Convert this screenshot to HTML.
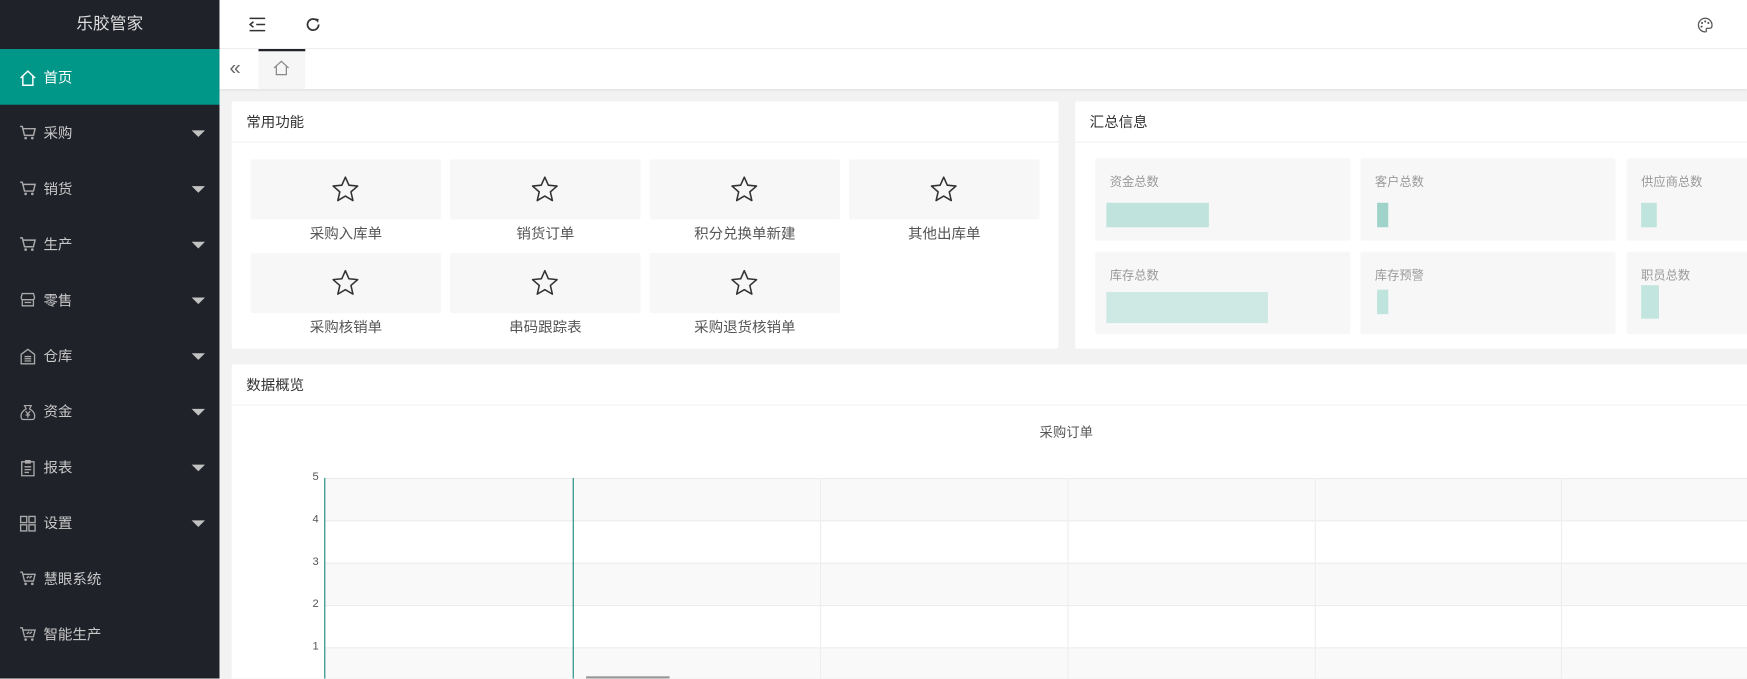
<!DOCTYPE html>
<html><head><meta charset="utf-8"><style>
*{box-sizing:border-box;margin:0;padding:0}
html,body{width:1747px;height:679px;overflow:hidden;background:#f2f2f2}
#w{position:absolute;left:0;top:0;width:1568px;height:609px;transform:scale(1.11416);transform-origin:0 0;font-family:"Liberation Sans","Noto Sans CJK SC",sans-serif;background:#f2f2f2;overflow:hidden}
.a{position:absolute}
#side{left:0;top:0;width:197px;height:609px;background:#20222a}
#logo{left:0;top:0;width:197px;height:44px;line-height:44px;text-align:center;color:#ddd;font-size:15px}
.mi{position:absolute;left:0;width:197px;height:50px;color:#c8c8c8;font-size:13px;line-height:52px}
.mi span{position:absolute;left:39px}
.mi svg{position:absolute;left:17px;top:18px}
.mi .ar{position:absolute;left:172px;top:23px;width:0;height:0;border-left:6px solid transparent;border-right:6px solid transparent;border-top:6px solid #c2c2c2}
.card{background:#fff;border-radius:2px}
.ch{position:absolute;left:0;top:0;right:0;height:37px;border-bottom:1px solid #f2f2f2;line-height:37px;padding-left:13px;font-size:13px;color:#333}
.qb{position:absolute;width:171px;height:54px;background:#f7f7f7;border-radius:2px}
.qb svg{position:absolute;left:72px;top:14px}
.ql{position:absolute;width:171px;text-align:center;font-size:13px;color:#555}
.sb{position:absolute;width:229px;height:74px;background:#f7f7f7;border-radius:2px}
.sb span{position:absolute;left:13px;top:13px;font-size:11px;color:#999}
.yl{position:absolute;left:276px;font-size:10px;color:#555;width:10px;text-align:right}
</style></head><body><div id="w">
<div id="side" class="a">
<div id="logo" class="a">乐胶管家</div>
<div class="mi" style="top:44px;height:50px;background:#009688;color:#fff"><svg width="16" height="16" viewBox="0 0 16 16"><path d="M1.5 8 L8 1.8 L14.5 8 M3.5 6.5 V14.5 H12.5 V6.5" fill="none" stroke="#fff" stroke-width="1.3"/></svg><span>首页</span></div>
<div class="mi" style="top:94px"><svg width="16" height="14" viewBox="0 0 16 14"><path d="M1 1.5H3l2 8h8l1.5-6H4" fill="none" stroke="#aaa" stroke-width="1.3"/><circle cx="6" cy="12" r="1.2" fill="#aaa"/><circle cx="12" cy="12" r="1.2" fill="#aaa"/></svg><span>采购</span><i class="ar"></i></div>
<div class="mi" style="top:144px"><svg width="16" height="14" viewBox="0 0 16 14"><path d="M1 1.5H3l2 8h8l1.5-6H4" fill="none" stroke="#aaa" stroke-width="1.3"/><circle cx="6" cy="12" r="1.2" fill="#aaa"/><circle cx="12" cy="12" r="1.2" fill="#aaa"/></svg><span>销货</span><i class="ar"></i></div>
<div class="mi" style="top:194px"><svg width="16" height="14" viewBox="0 0 16 14"><path d="M1 1.5H3l2 8h8l1.5-6H4" fill="none" stroke="#aaa" stroke-width="1.3"/><circle cx="6" cy="12" r="1.2" fill="#aaa"/><circle cx="12" cy="12" r="1.2" fill="#aaa"/></svg><span>生产</span><i class="ar"></i></div>
<div class="mi" style="top:244px"><svg width="16" height="14" viewBox="0 0 16 14"><path d="M2 5 L3 1.5 H13 L14 5 Q14 7 12 7 H4 Q2 7 2 5Z M3 7 V12.5 H13 V7 M5 9.5 H11" fill="none" stroke="#aaa" stroke-width="1.2"/></svg><span>零售</span><i class="ar"></i></div>
<div class="mi" style="top:294px"><svg width="16" height="16" viewBox="0 0 16 16"><path d="M2 6 L8 1.5 L14 6 V14.5 H2Z M5 8h6M5 10h6M5 12h6" fill="none" stroke="#aaa" stroke-width="1.2"/></svg><span>仓库</span><i class="ar"></i></div>
<div class="mi" style="top:344px"><svg width="16" height="16" viewBox="0 0 16 16"><path d="M5 2 H11 L9.5 5 Q15 8 14 13 Q13.5 14.5 12 14.5 H4 Q2.5 14.5 2 13 Q1 8 6.5 5Z M6 7l2 2.5 2-2.5M8 9.5V13M6 10.5h4" fill="none" stroke="#aaa" stroke-width="1.1"/></svg><span>资金</span><i class="ar"></i></div>
<div class="mi" style="top:394px"><svg width="16" height="16" viewBox="0 0 16 16"><path d="M2.5 2.5 H13.5 V15 H2.5Z M6 1.5 H10 V3.5 H6Z M5 7h6M5 9.5h6M5 12h4" fill="none" stroke="#aaa" stroke-width="1.2"/></svg><span>报表</span><i class="ar"></i></div>
<div class="mi" style="top:444px"><svg width="16" height="16" viewBox="0 0 16 16"><path d="M1.5 1.5h5.5v5.5h-5.5zM9 1.5h5.5v5.5H9zM1.5 9h5.5v5.5h-5.5zM9 9h5.5v5.5H9z" fill="none" stroke="#aaa" stroke-width="1.2"/></svg><span>设置</span><i class="ar"></i></div>
<div class="mi" style="top:494px"><svg width="16" height="14" viewBox="0 0 16 14"><path d="M1 1.5H3l2 8h8l1.5-6H4M7 7l2-2M9.5 7l2-2" fill="none" stroke="#aaa" stroke-width="1.2"/><circle cx="6" cy="12" r="1.2" fill="#aaa"/><circle cx="12" cy="12" r="1.2" fill="#aaa"/></svg><span>慧眼系统</span></div>
<div class="mi" style="top:544px"><svg width="16" height="14" viewBox="0 0 16 14"><path d="M1 1.5H3l2 8h8l1.5-6H4M7 7l2-2M9.5 7l2-2" fill="none" stroke="#aaa" stroke-width="1.2"/><circle cx="6" cy="12" r="1.2" fill="#aaa"/><circle cx="12" cy="12" r="1.2" fill="#aaa"/></svg><span>智能生产</span></div>
</div>
<div class="a" style="left:197px;top:0;width:1371px;height:44px;background:#fff;border-bottom:1px solid #f0f0f0"></div>
<svg class="a" style="left:223px;top:15px" width="16" height="14" viewBox="0 0 16 14"><path d="M1 1.5h14M7 7h8M1 12.5h14M4.5 4.5 L1.5 7 L4.5 9.5" fill="none" stroke="#333" stroke-width="1.4"/></svg>
<svg class="a" style="left:273px;top:14px" width="16" height="16" viewBox="0 0 16 16"><path d="M13 8 A5 5 0 1 1 11.3 4.3" fill="none" stroke="#333" stroke-width="1.6"/><path d="M9.5 2.5 L13 3 L12.5 6.5Z" fill="#333"/></svg>
<svg class="a" style="left:1523px;top:15px" width="15" height="15" viewBox="0 0 16 16"><path d="M8 1.5 A6.5 6.5 0 0 0 8 14.5 Q9.5 14.5 9 12.8 Q8.5 11 10.5 11 H12.5 Q14.5 11 14.5 8 A6.5 6.5 0 0 0 8 1.5Z" fill="none" stroke="#555" stroke-width="1.2"/><circle cx="5" cy="6" r="1" fill="#555"/><circle cx="8" cy="4.5" r="1" fill="#555"/><circle cx="11" cy="6" r="1" fill="#555"/><circle cx="4.5" cy="9.5" r="1" fill="#555"/></svg>
<div class="a" style="left:197px;top:44px;width:1371px;height:36px;background:#fff;box-shadow:0 1px 2px rgba(0,0,0,.1)"></div>
<div class="a" style="left:206px;top:51px;font-size:18px;color:#666;letter-spacing:-5px">«</div>
<div class="a" style="left:232px;top:44px;width:42px;height:36px;background:#f6f6f6;border-top:2px solid #20222a"></div>
<svg class="a" style="left:245px;top:54px" width="15" height="14" viewBox="0 0 15 14"><path d="M1 7 L7.5 1 L14 7 M3 5.5 V13 H12 V5.5" fill="none" stroke="#888" stroke-width="1.1"/></svg>

<div class="a card" style="left:208px;top:91px;width:742px;height:222px">
<div class="ch">常用功能</div>
</div>
<div class="a card" style="left:965px;top:91px;width:610px;height:222px">
<div class="ch">汇总信息</div>
</div>
<div class="a card" style="left:208px;top:327px;width:1370px;height:290px">
<div class="ch">数据概览</div>
</div>
<div class="qb" style="left:225px;top:143px"><svg width="26" height="26" viewBox="0 0 26 26"><path d="M13 2 L16.2 9.2 L24 10 L18 15.2 L19.8 23 L13 19 L6.2 23 L8 15.2 L2 10 L9.8 9.2Z" fill="none" stroke="#333" stroke-width="1.4" stroke-linejoin="round"/></svg></div>
<div class="qb" style="left:404px;top:143px"><svg width="26" height="26" viewBox="0 0 26 26"><path d="M13 2 L16.2 9.2 L24 10 L18 15.2 L19.8 23 L13 19 L6.2 23 L8 15.2 L2 10 L9.8 9.2Z" fill="none" stroke="#333" stroke-width="1.4" stroke-linejoin="round"/></svg></div>
<div class="qb" style="left:583px;top:143px"><svg width="26" height="26" viewBox="0 0 26 26"><path d="M13 2 L16.2 9.2 L24 10 L18 15.2 L19.8 23 L13 19 L6.2 23 L8 15.2 L2 10 L9.8 9.2Z" fill="none" stroke="#333" stroke-width="1.4" stroke-linejoin="round"/></svg></div>
<div class="qb" style="left:762px;top:143px"><svg width="26" height="26" viewBox="0 0 26 26"><path d="M13 2 L16.2 9.2 L24 10 L18 15.2 L19.8 23 L13 19 L6.2 23 L8 15.2 L2 10 L9.8 9.2Z" fill="none" stroke="#333" stroke-width="1.4" stroke-linejoin="round"/></svg></div>
<div class="qb" style="left:225px;top:227px"><svg width="26" height="26" viewBox="0 0 26 26"><path d="M13 2 L16.2 9.2 L24 10 L18 15.2 L19.8 23 L13 19 L6.2 23 L8 15.2 L2 10 L9.8 9.2Z" fill="none" stroke="#333" stroke-width="1.4" stroke-linejoin="round"/></svg></div>
<div class="qb" style="left:404px;top:227px"><svg width="26" height="26" viewBox="0 0 26 26"><path d="M13 2 L16.2 9.2 L24 10 L18 15.2 L19.8 23 L13 19 L6.2 23 L8 15.2 L2 10 L9.8 9.2Z" fill="none" stroke="#333" stroke-width="1.4" stroke-linejoin="round"/></svg></div>
<div class="qb" style="left:583px;top:227px"><svg width="26" height="26" viewBox="0 0 26 26"><path d="M13 2 L16.2 9.2 L24 10 L18 15.2 L19.8 23 L13 19 L6.2 23 L8 15.2 L2 10 L9.8 9.2Z" fill="none" stroke="#333" stroke-width="1.4" stroke-linejoin="round"/></svg></div>
<div class="ql" style="left:225px;top:199px">采购入库单</div>
<div class="ql" style="left:404px;top:199px">销货订单</div>
<div class="ql" style="left:583px;top:199px">积分兑换单新建</div>
<div class="ql" style="left:762px;top:199px">其他出库单</div>
<div class="ql" style="left:225px;top:283px">采购核销单</div>
<div class="ql" style="left:404px;top:283px">串码跟踪表</div>
<div class="ql" style="left:583px;top:283px">采购退货核销单</div>

<div class="sb" style="left:983px;top:142px"><span>资金总数</span><div class="a" style="left:10px;top:40px;width:92px;height:22px;background:#b2ddd6;opacity:.8"></div></div>
<div class="sb" style="left:1221px;top:142px"><span>客户总数</span><div class="a" style="left:15px;top:40px;width:10px;height:22px;background:#9fd3ca"></div></div>
<div class="sb" style="left:1460px;top:142px;width:120px"><span>供应商总数</span><div class="a" style="left:13px;top:40px;width:14px;height:22px;background:#bfe3dd"></div></div>
<div class="sb" style="left:983px;top:226px"><span>库存总数</span><div class="a" style="left:10px;top:36px;width:145px;height:28px;background:#c3e5df;opacity:.8"></div></div>
<div class="sb" style="left:1221px;top:226px"><span>库存预警</span><div class="a" style="left:15px;top:34px;width:10px;height:22px;background:#bfe3dd"></div></div>
<div class="sb" style="left:1460px;top:226px;width:120px"><span>职员总数</span><div class="a" style="left:13px;top:30px;width:16px;height:30px;background:#c3e5df"></div></div>

<div class="a" style="left:933px;top:379px;font-size:12px;color:#555">采购订单</div>
<div class="a" style="left:292px;top:429px;width:1290px;height:38px;background:#f9f9f9;border-top:1px solid #ececec"></div>
<div class="a" style="left:292px;top:467px;width:1290px;border-top:1px solid #ececec"></div>
<div class="a" style="left:292px;top:505px;width:1290px;height:38px;background:#f9f9f9;border-top:1px solid #ececec"></div>
<div class="a" style="left:292px;top:543px;width:1290px;border-top:1px solid #ececec"></div>
<div class="a" style="left:292px;top:581px;width:1290px;height:40px;background:#f9f9f9;border-top:1px solid #ececec"></div>
<div class="a" style="left:736px;top:429px;height:190px;border-left:1px solid #eee"></div>
<div class="a" style="left:958px;top:429px;height:190px;border-left:1px solid #eee"></div>
<div class="a" style="left:1180px;top:429px;height:190px;border-left:1px solid #eee"></div>
<div class="a" style="left:1401px;top:429px;height:190px;border-left:1px solid #eee"></div>
<div class="a" style="left:291px;top:429px;height:190px;border-left:1.5px solid #16897a"></div>
<div class="a" style="left:514px;top:429px;height:190px;border-left:1.5px solid #16897a"></div>
<div class="a" style="left:526px;top:607px;width:75px;height:2px;background:#999"></div>
<div class="yl" style="top:423px">5</div>
<div class="yl" style="top:461px">4</div>
<div class="yl" style="top:499px">3</div>
<div class="yl" style="top:537px">2</div>
<div class="yl" style="top:575px">1</div>
</div></body></html>
